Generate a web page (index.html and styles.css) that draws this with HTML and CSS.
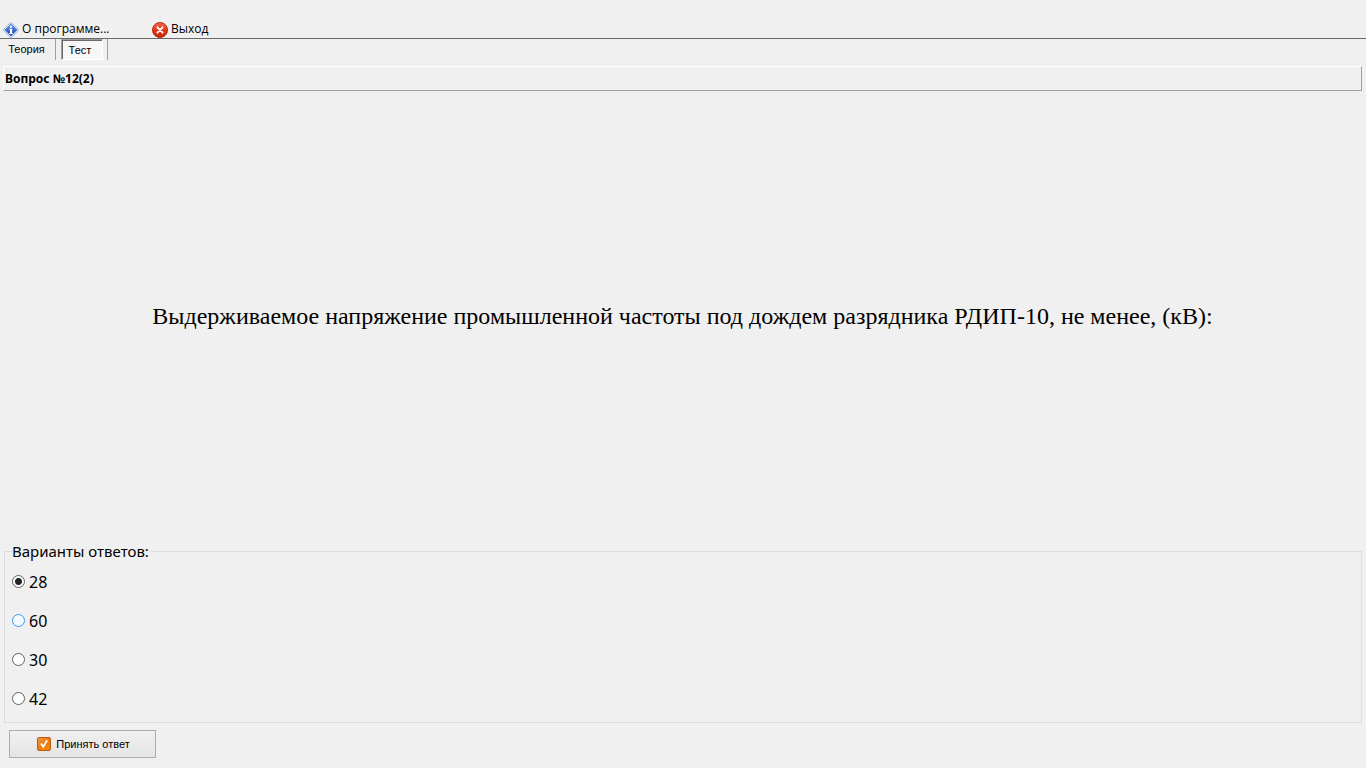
FILE: index.html
```html
<!DOCTYPE html>
<html lang="ru">
<head>
<meta charset="utf-8">
<title>Тест</title>
<link rel="stylesheet" href="styles.css">
</head>
<body>
<header class="toolbar">
  <button class="tool tool-about" type="button">
    <svg class="icon" viewBox="0 0 16 16" aria-hidden="true">
      <defs>
        <linearGradient id="blue" x1="0" y1="0" x2="0" y2="1"><stop offset="0" stop-color="#6f9cec"/><stop offset="1" stop-color="#0d41ae"/></linearGradient>
      </defs>
      <path d="M7 1.1Q8 .2 9 1.1L14.9 7Q15.8 8 14.9 9L9 14.9Q8 15.8 7 14.9L1.1 9Q.2 8 1.1 7Z" fill="#e3edfa" stroke="#8daee0" stroke-width=".9"/>
      <path d="M8 2L14 8L8 14L2 8Z" fill="url(#blue)" stroke="#2c62c6" stroke-width=".6" stroke-linejoin="round"/>
      <circle cx="8" cy="4.8" r="1.2" fill="#fff"/>
      <path d="M6.4 6.7H9.1V11H9.9V12H6.2V11H7V7.7H6.4Z" fill="#fff"/>
    </svg>
    <span>О программе...</span>
  </button>
  <button class="tool" type="button">
    <svg class="icon" viewBox="0 0 16 16" aria-hidden="true">
      <defs>
        <linearGradient id="red" x1="0" y1="0" x2="0" y2="1"><stop offset="0" stop-color="#f06a50"/><stop offset=".5" stop-color="#e83416"/><stop offset="1" stop-color="#c82806"/></linearGradient>
      </defs>
      <circle cx="8" cy="8" r="7.5" fill="url(#red)" stroke="#b02a10"/>
      <path d="M5.4 5.4L10.6 10.6M10.6 5.4L5.4 10.6" stroke="#fff" stroke-width="2" stroke-linecap="round"/>
    </svg>
    <span>Выход</span>
  </button>
</header>
<nav class="tabs">
  <button class="tab" type="button">Теория</button>
  <button class="tab tab-active" type="button" aria-current="page">Тест</button>
</nav>
<main class="page">
  <h1 class="number">Вопрос №12(2)</h1>
  <p class="question">Выдерживаемое напряжение промышленной частоты под дождем разрядника РДИП-10, не менее, (кВ):</p>
  <form class="form">
    <fieldset class="answers">
      <legend class="legend">Варианты ответов:</legend>
      <label class="option"><input class="radio" type="radio" name="answer" value="28" checked><span>28</span></label>
      <label class="option"><input class="radio radio-hot" type="radio" name="answer" value="60"><span>60</span></label>
      <label class="option"><input class="radio" type="radio" name="answer" value="30"><span>30</span></label>
      <label class="option"><input class="radio" type="radio" name="answer" value="42"><span>42</span></label>
    </fieldset>
    <button class="accept" type="button">
      <svg class="accept-icon" viewBox="0 0 14 14" aria-hidden="true">
        <defs>
          <linearGradient id="orange" x1="0" y1="0" x2="1" y2="1"><stop offset="0" stop-color="#ef9a4c"/><stop offset=".5" stop-color="#ee7a10"/><stop offset="1" stop-color="#f08a08"/></linearGradient>
        </defs>
        <rect x=".5" y=".5" width="13" height="13" rx="1.2" fill="url(#orange)" stroke="#b85c14"/>
        <path d="M4 6.5L6.2 9.8L10.2 3.2" fill="none" stroke="#fff" stroke-width="1.7"/>
      </svg>
      <span>Принять ответ</span>
    </button>
  </form>
</main>
</body>
</html>
```
FILE: styles.css
```css
* {
  box-sizing: border-box;
}

body {
  margin: 0;
  min-height: 100vh;
  display: flex;
  flex-direction: column;
  background: #f0f0f0;
  color: #000;
  font-family: "Noto Sans", sans-serif;
}

button {
  margin: 0;
  padding: 0;
  border: 0;
  background: none;
  color: inherit;
}

.toolbar {
  display: flex;
  padding: 22px 3px 0;
  border-bottom: 1px solid #696969;
}

.tool {
  display: flex;
  align-items: center;
  gap: 3px;
  height: 16px;
  font: 12px/14px "Open Sans", "Noto Sans", sans-serif;
}

.tool span {
  padding-bottom: 2px;
}

.tool-about {
  width: 149px;
}

.icon {
  width: 16px;
  height: 16px;
}

.tabs {
  display: flex;
  height: 21px;
}

.tab {
  width: 56px;
  padding: 0 2px 1px 0;
  border-right: 1px solid #a0a0a0;
  font: 11px/18px "Liberation Sans", Arial, sans-serif;
}

.tab-active {
  width: 42px;
  margin-left: 5px;
  padding: 0 4px 0 0;
  border: 1px solid #fff;
  border-top-color: #a0a0a0;
  border-left-color: #a0a0a0;
  box-shadow: inset 1px 1px #696969;
  background: #f7f7f7;
}

.tabs::after {
  content: "";
  width: 1px;
  margin-left: 4px;
  background: #a0a0a0;
}

.page {
  flex: 1;
  display: flex;
  flex-direction: column;
  padding: 6px 4px 10px 3px;
}

.number {
  margin: 0;
  padding: 0 1px;
  border: 1px solid #a0a0a0;
  border-top-color: #fff;
  border-left-color: #fff;
  font: bold 12px/23px "Noto Sans", sans-serif;
}

.question {
  flex: 1;
  display: flex;
  align-items: center;
  justify-content: center;
  margin: 0;
  text-align: center;
  font: 24px/28px "Liberation Serif", "Times New Roman", serif;
}

.form {
  padding-left: 1px;
}

.answers {
  min-width: 0;
  margin: 0 0 7px;
  padding: 0 7px 4px;
  border: 1px solid #dcdcdc;
}

.legend {
  padding: 1px 1px 0 0;
  font-size: 15px;
  line-height: 21px;
}

.option {
  display: flex;
  align-items: center;
  gap: 4px;
  height: 39px;
  font-size: 16px;
}

.radio {
  appearance: none;
  width: 13px;
  height: 13px;
  margin: 0;
  border: 1px solid #606060;
  border-radius: 50%;
  background: #fff;
}

.radio:checked {
  background: radial-gradient(circle, #222 3px, #fff 4px);
}

.radio-hot {
  border-color: #3399ff;
  background: #f3f9ff;
}

.accept {
  display: flex;
  align-items: center;
  justify-content: center;
  gap: 5px;
  width: 147px;
  height: 28px;
  margin-left: 5px;
  padding-left: 2px;
  border: 1px solid #acacac;
  background: linear-gradient(#f0f0f0, #e5e5e5);
  font: 11px/14px "Liberation Sans", Arial, sans-serif;
}

.accept-icon {
  width: 14px;
  height: 14px;
}
```
